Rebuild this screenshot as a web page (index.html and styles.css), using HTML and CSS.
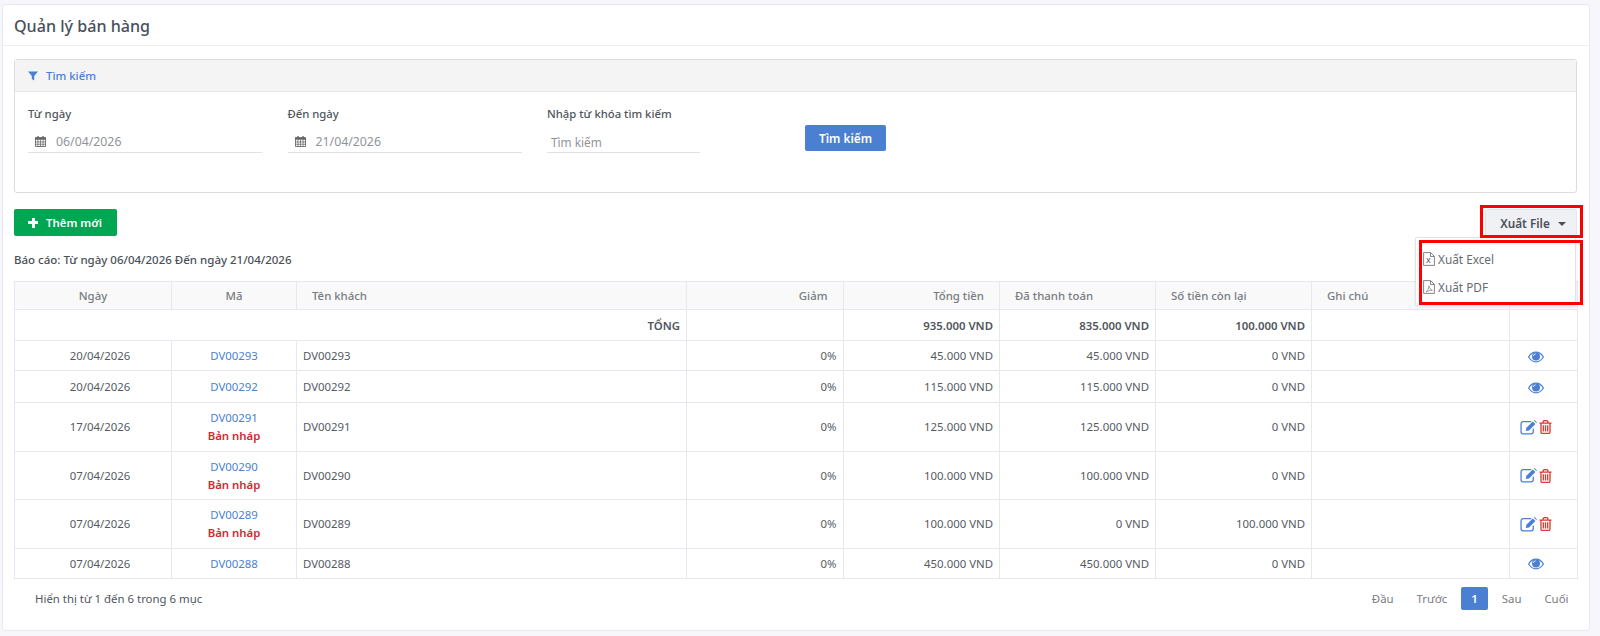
FILE: index.html
```html
<!DOCTYPE html>
<html lang="en">
<head>
    <meta charset="UTF-8">
    <meta name="viewport" content="width=device-width, initial-scale=1.0">
    <title>Quản lý bán hàng</title>
    <link rel="stylesheet" href="styles.css">
</head>
<body>
    <svg class="sprite" aria-hidden="true">
        <symbol id="ic-eye" viewBox="0 0 16 12">
            <path d="M.6 6C2.4 3 5 1.2 8 1.2S13.6 3 15.4 6c-1.8 3-4.400 4.800-7.400 4.800S2.400 9 .6 6z" fill="none" stroke="currentColor" stroke-width="1.200"/>
            <circle cx="8" cy="5.600" r="4" fill="currentColor"/>
            <path d="M5.300 4.800c.3-1 1.100-1.700 2.200-1.900" fill="none" stroke="#fff" stroke-width="1"/>
        </symbol>
        <symbol id="ic-edit" viewBox="0 0 16 14">
            <path d="M10.500 1.500H3a2 2 0 0 0-2 2V11a2 2 0 0 0 2 2h7.500a2 2 0 0 0 2-2V8" fill="none" stroke="currentColor" stroke-width="1.200"/>
            <path d="M6 7.300l6-6 2.500 2.500-6 6-3 .5z" fill="currentColor"/>
            <path d="M13 .4l.8-.4 2 2-.3.900z" fill="currentColor"/>
        </symbol>
        <symbol id="ic-trash" viewBox="0 0 13 14">
            <path d="M.5 3.200h12M4.200 3V1.500l1-1h2.600l1 1V3M2 3.200V12a1.500 1.500 0 0 0 1.500 1.500h6A1.500 1.500 0 0 0 11 12V3.200" fill="none" stroke="currentColor" stroke-width="1.300"/>
            <path d="M4.300 5.200v6.300M6.500 5.200v6.300M8.700 5.200v6.300" fill="none" stroke="currentColor" stroke-width="1.300"/>
        </symbol>
        <symbol id="ic-calendar" viewBox="0 0 12 12">
            <path d="M.5 1.800h11V11.500H.5z" fill="none" stroke="currentColor"/>
            <path d="M0 1.500h12v2.500H0zM2.500 0h1.500v2.500H2.500zM8 0h1.500v2.500H8z" fill="currentColor"/>
            <path d="M3.200 4v7.500M6 4v7.500M8.800 4v7.500M.5 6.500h11M.5 9h11" fill="none" stroke="currentColor" stroke-width=".8"/>
        </symbol>
        <symbol id="ic-file" viewBox="0 0 12 14">
            <path d="M.6.6h7l3.800 3.800v9H.6zM7.500.6v3.900h3.900" fill="none" stroke="currentColor" stroke-width=".9"/>
        </symbol>
    </svg>

    <div class="page-card">
        <div class="page-title">Quản lý bán hàng</div>

        <div class="page-body">
            <div class="search-panel">
                <div class="search-head">
                    <svg class="filter-icon" viewBox="0 0 10 10"><path d="M0 .5h10L6.200 5v4.500L3.800 8V5z" fill="currentColor"/></svg>
                    Tìm kiếm
                </div>
                <div class="search-body">
                    <div class="field">
                        <label>Từ ngày</label>
                        <div class="field-input">
                            <svg class="cal-icon"><use href="#ic-calendar"/></svg>
                            <span>06/04/2026</span>
                        </div>
                    </div>
                    <div class="field">
                        <label>Đến ngày</label>
                        <div class="field-input">
                            <svg class="cal-icon"><use href="#ic-calendar"/></svg>
                            <span>21/04/2026</span>
                        </div>
                    </div>
                    <div class="field field-short">
                        <label>Nhập từ khóa tìm kiếm</label>
                        <div class="field-input field-text">
                            <span>Tìm kiếm</span>
                        </div>
                    </div>
                    <button class="btn btn-search">Tìm kiếm</button>
                </div>
            </div>

            <div class="toolbar">
                <button class="btn btn-add"><span class="plus"></span>Thêm mới</button>
                <button class="btn btn-export">Xuất File<span class="caret"></span></button>

                <div class="export-menu">
                    <div class="export-item">
                        <span class="file-icon">
                            <svg><use href="#ic-file"/></svg>
                            <b>x</b>
                        </span>
                        Xuất Excel
                    </div>
                    <div class="export-item">
                        <span class="file-icon">
                            <svg><use href="#ic-file"/></svg>
                            <svg class="pdf-mark" viewBox="0 0 8 8"><path d="M1 7c1.500-1 3-4 2.800-6.200C5 3.500 5.800 5 7.400 5.300 5 5.300 3 6 1 7z" fill="none" stroke="currentColor" stroke-width=".7"/></svg>
                        </span>
                        Xuất PDF
                    </div>
                </div>
                <!-- red marks drawn over the screenshot -->
                <div class="mark mark-button"></div>
                <div class="mark mark-menu"></div>
            </div>

            <div class="report-line">Báo cáo: Từ ngày 06/04/2026 Đến ngày 21/04/2026</div>

            <table class="sales-table">
                <colgroup>
                    <col class="col-date"><col class="col-code"><col class="col-name"><col class="col-money">
                    <col class="col-money"><col class="col-paid"><col class="col-paid"><col class="col-note"><col class="col-act">
                </colgroup>
                <thead>
                    <tr>
                        <th class="center">Ngày</th>
                        <th class="center">Mã</th>
                        <th>Tên khách</th>
                        <th class="right">Giảm</th>
                        <th class="right">Tổng tiền</th>
                        <th>Đã thanh toán</th>
                        <th>Số tiền còn lại</th>
                        <th>Ghi chú</th>
                        <th></th>
                    </tr>
                </thead>
                <tbody>
                    <tr class="row-total">
                        <td colspan="3" class="right">TỔNG</td>
                        <td></td>
                        <td class="right">935.000 VND</td>
                        <td class="right">835.000 VND</td>
                        <td class="right">100.000 VND</td>
                        <td></td>
                        <td></td>
                    </tr>
                    <tr class="row-a">
                        <td class="cell-date">20/04/2026</td>
                        <td class="cell-code"><a href="#">DV00293</a></td>
                        <td>DV00293</td>
                        <td class="right">0%</td>
                        <td class="right">45.000 VND</td>
                        <td class="right">45.000 VND</td>
                        <td class="right">0 VND</td>
                        <td></td>
                        <td class="cell-act"><svg class="ic-eye"><use href="#ic-eye"/></svg></td>
                    </tr>
                    <tr class="row-b">
                        <td class="cell-date">20/04/2026</td>
                        <td class="cell-code"><a href="#">DV00292</a></td>
                        <td>DV00292</td>
                        <td class="right">0%</td>
                        <td class="right">115.000 VND</td>
                        <td class="right">115.000 VND</td>
                        <td class="right">0 VND</td>
                        <td></td>
                        <td class="cell-act"><svg class="ic-eye"><use href="#ic-eye"/></svg></td>
                    </tr>
                    <tr class="row-tall">
                        <td class="cell-date">17/04/2026</td>
                        <td class="cell-code"><a href="#">DV00291</a><div class="draft">Bản nháp</div></td>
                        <td>DV00291</td>
                        <td class="right">0%</td>
                        <td class="right">125.000 VND</td>
                        <td class="right">125.000 VND</td>
                        <td class="right">0 VND</td>
                        <td></td>
                        <td class="cell-act"><svg class="ic-edit"><use href="#ic-edit"/></svg><svg class="ic-trash"><use href="#ic-trash"/></svg></td>
                    </tr>
                    <tr class="row-tall">
                        <td class="cell-date">07/04/2026</td>
                        <td class="cell-code"><a href="#">DV00290</a><div class="draft">Bản nháp</div></td>
                        <td>DV00290</td>
                        <td class="right">0%</td>
                        <td class="right">100.000 VND</td>
                        <td class="right">100.000 VND</td>
                        <td class="right">0 VND</td>
                        <td></td>
                        <td class="cell-act"><svg class="ic-edit"><use href="#ic-edit"/></svg><svg class="ic-trash"><use href="#ic-trash"/></svg></td>
                    </tr>
                    <tr class="row-tall">
                        <td class="cell-date">07/04/2026</td>
                        <td class="cell-code"><a href="#">DV00289</a><div class="draft">Bản nháp</div></td>
                        <td>DV00289</td>
                        <td class="right">0%</td>
                        <td class="right">100.000 VND</td>
                        <td class="right">0 VND</td>
                        <td class="right">100.000 VND</td>
                        <td></td>
                        <td class="cell-act"><svg class="ic-edit"><use href="#ic-edit"/></svg><svg class="ic-trash"><use href="#ic-trash"/></svg></td>
                    </tr>
                    <tr class="row-a">
                        <td class="cell-date">07/04/2026</td>
                        <td class="cell-code"><a href="#">DV00288</a></td>
                        <td>DV00288</td>
                        <td class="right">0%</td>
                        <td class="right">450.000 VND</td>
                        <td class="right">450.000 VND</td>
                        <td class="right">0 VND</td>
                        <td></td>
                        <td class="cell-act"><svg class="ic-eye"><use href="#ic-eye"/></svg></td>
                    </tr>
                </tbody>
            </table>

            <div class="table-foot">
                <div class="table-info">Hiển thị từ 1 đến 6 trong 6 mục</div>
                <div class="pager">
                    <a href="#">Đầu</a>
                    <a href="#">Trước</a>
                    <a href="#" class="active">1</a>
                    <a href="#">Sau</a>
                    <a href="#">Cuối</a>
                </div>
            </div>
        </div>
    </div>
</body>
</html>
```

FILE: styles.css
```css
body {
    font-family: "Noto Sans", Arial, sans-serif;
    font-size: 11.4px;
    color: #555b63;
    background: #f6f6fb;
    margin: 0;
    padding: 4px 0 0 2px;
}

.sprite {
    position: absolute;
    width: 0;
    height: 0;
}

.page-card {
    width: 1588px;
    height: 627px;
    box-sizing: border-box;
    background: #fff;
    border: 1px solid #e6e8f1;
    border-radius: 3px;
}

.page-title {
    height: 40px;
    line-height: 42px;
    padding-left: 11px;
    font-size: 16.1px;
    font-weight: 500;
    color: #48505b;
    border-bottom: 1px solid #eceef3;
}

.page-body {
    padding: 13px 0 0 11px;
}

/* search box */
.search-panel {
    width: 1563px;
    height: 134px;
    box-sizing: border-box;
    border: 1px solid #dcdcdc;
    border-radius: 3px;
}

.search-head {
    height: 31px;
    line-height: 31px;
    padding-left: 13px;
    background: #f4f4f4;
    border-bottom: 1px solid #e4e4e4;
    color: #4a7fd4;
    font-weight: 500;
    display: flex;
    align-items: center;
    gap: 8px;
}

.filter-icon {
    width: 10px;
    height: 10px;
}

.search-body {
    display: flex;
    padding: 13px 0 0 13px;
}

.field {
    width: 234px;
    margin-right: 25.5px;
}

.field-short {
    width: 153px;
    margin-right: 105px;
}

.field label {
    display: block;
    font-size: 11.3px;
    font-weight: 500;
    color: #4f555c;
    height: 18px;
    line-height: 18px;
}

.field-input {
    height: 22px;
    margin-top: 8px;
    border-bottom: 1px solid #dfe1e5;
    display: flex;
    align-items: center;
    padding-left: 7px;
    color: #8f9499;
    font-size: 12.3px;
    box-sizing: border-box;
}

.field-text {
    padding-left: 4px;
    font-size: 11.8px;
}

.cal-icon {
    width: 11px;
    height: 11px;
    color: #666;
    margin-right: 10px;
}

.btn {
    font-family: inherit;
    font-size: 11.4px;
    font-weight: 600;
    border: none;
    border-radius: 2px;
    cursor: pointer;
}

.btn-search {
    width: 81px;
    height: 26px;
    margin-top: 20px;
    background: #4a7fd1;
    color: #fff;
    font-size: 11.8px;
}

/* toolbar with export menu */
.toolbar {
    position: relative;
    width: 1563px;
    height: 27px;
    margin-top: 16px;
    display: flex;
    justify-content: space-between;
}

.btn-add {
    width: 103px;
    height: 27px;
    background: #00a651;
    color: #fff;
    display: flex;
    align-items: center;
    padding-left: 14px;
}

.plus {
    width: 10px;
    height: 10px;
    margin-right: 8px;
    background: linear-gradient(#fff, #fff) center / 100% 3px no-repeat,
                linear-gradient(#fff, #fff) center / 3px 100% no-repeat;
}

.btn-export {
    width: 92px;
    height: 27px;
    background: #f0f1f5;
    color: #4a5058;
    border: 1px solid #e2e5ee;
    box-sizing: border-box;
    font-size: 11.8px;
    padding: 0 0 0 4px;
}

.caret {
    display: inline-block;
    margin-left: 8px;
    vertical-align: 2px;
    border-top: 4px solid #4a5058;
    border-left: 4px solid transparent;
    border-right: 4px solid transparent;
}

.export-menu {
    position: absolute;
    top: 28px;
    right: 1px;
    width: 161px;
    height: 69px;
    box-sizing: border-box;
    background: #fff;
    border: 1px solid #e2e2e8;
    border-radius: 2px;
    box-shadow: 0 1px 3px rgba(0, 0, 0, 0.08);
    padding-top: 7px;
    z-index: 2;
}

.export-item {
    height: 28px;
    display: flex;
    align-items: center;
    padding-left: 7px;
    color: #666b72;
    font-size: 11.8px;
}

.file-icon {
    position: relative;
    width: 12px;
    height: 14px;
    margin-right: 3px;
}

.file-icon svg {
    display: block;
    width: 12px;
    height: 14px;
    color: #777;
}

.file-icon b {
    position: absolute;
    left: 3px;
    top: 1px;
    font-size: 9px;
    line-height: 14px;
    font-weight: 400;
    color: #555;
}

.file-icon .pdf-mark {
    position: absolute;
    left: 2px;
    top: 5px;
    width: 8px;
    height: 8px;
}

.mark {
    position: absolute;
    border: 3px solid #f00;
    box-sizing: border-box;
    z-index: 3;
}

.mark-button {
    right: -6px;
    top: -4px;
    width: 103px;
    height: 33px;
}

.mark-menu {
    right: -6px;
    top: 31px;
    width: 164px;
    height: 65px;
}

.report-line {
    margin-top: 15px;
    height: 18px;
    line-height: 18px;
    font-size: 11.5px;
    font-weight: 500;
    color: #4a5058;
}

/* table */
.sales-table {
    width: 1563px;
    margin-top: 12px;
    table-layout: fixed;
    border-collapse: collapse;
}

.col-date { width: 157px; }
.col-code { width: 125px; }
.col-name { width: 390px; }
.col-money { width: 156.500px; }
.col-paid { width: 156px; }
.col-note { width: 198px; }
.col-act { width: 68px; }

.sales-table th,
.sales-table td {
    border: 1px solid #e6e8ef;
    padding: 0 6px;
    overflow: hidden;
    white-space: nowrap;
}

.sales-table th {
    height: 27px;
    padding: 0 15px;
    background: #f9f9f9;
    font-weight: 500;
    color: #777c82;
    text-align: left;
}

.sales-table th.center,
.sales-table td.center {
    text-align: center;
}

.sales-table th.right,
.sales-table td.right {
    text-align: right;
}

.sales-table td.cell-date {
    text-align: center;
    padding-left: 20px;
}

.sales-table td.cell-code {
    text-align: center;
    padding-right: 6px;
    padding-left: 6px;
}

.sales-table td.cell-act {
    text-align: center;
    padding-left: 0;
    padding-right: 16px;
}

.sales-table a {
    color: #4a7fd4;
    text-decoration: none;
}

.row-total td {
    height: 30px;
    font-weight: 600;
    color: #4f555c;
}

.row-a td { height: 29px; }
.row-b td { height: 31px; }
.row-tall td { height: 47.500px; }

.draft {
    font-weight: 600;
    color: #cf2a30;
    margin-top: 3px;
}

.ic-eye {
    display: inline-block;
    vertical-align: middle;
    width: 16px;
    height: 12px;
    color: #4a7fd4;
}

.ic-edit {
    display: inline-block;
    vertical-align: middle;
    width: 17px;
    height: 15px;
    color: #4a7fd4;
    margin-right: 2px;
}

.ic-trash {
    display: inline-block;
    vertical-align: middle;
    width: 13px;
    height: 14px;
    color: #d8392f;
}

/* bottom row */
.table-foot {
    width: 1566px;
    margin-top: 8px;
    display: flex;
    justify-content: space-between;
    align-items: center;
}

.table-info {
    padding-left: 21px;
    color: #4f555c;
}

.pager {
    display: flex;
    align-items: center;
}

.pager a {
    height: 23px;
    line-height: 23px;
    padding: 0 11.500px;
    color: #777c82;
    text-decoration: none;
    border-radius: 2px;
}

.pager a.active {
    padding: 0 10px;
    margin: 0 2.500px;
    background: #4a7fd1;
    color: #fff;
    font-weight: 600;
}
```
